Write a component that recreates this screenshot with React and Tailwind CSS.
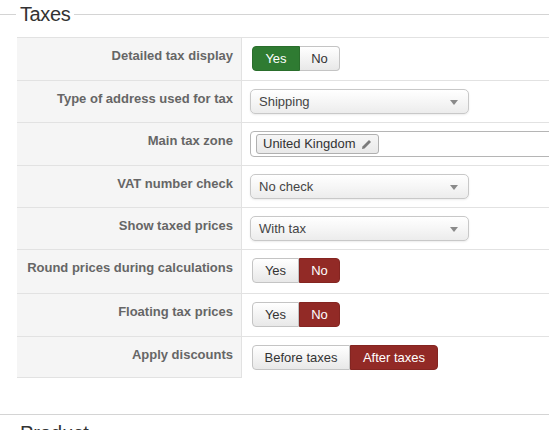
import React from "react";

const FONT = { fontFamily: '"Liberation Sans", Arial, Helvetica, sans-serif' };

function Toggle({ options }) {
  return (
    <div className="ml-[2px] flex h-[25px]">
      {options.map((o, i) => {
        const first = i === 0;
        const last = i === options.length - 1;
        const round = `${first ? "rounded-l-[4px]" : ""} ${last ? "rounded-r-[4px]" : ""}`;
        if (o.active === "green") {
          return (
            <div
              key={o.label}
              className={`flex items-center justify-center border border-[#2a6e2c] bg-[#2f7b32] text-[13px] text-white ${round}`}
              style={{ width: o.w }}
            >
              {o.label}
            </div>
          );
        }
        if (o.active === "red") {
          return (
            <div
              key={o.label}
              className={`flex items-center justify-center border border-[#842521] bg-[#922a26] text-[13px] text-white ${round}`}
              style={{ width: o.w }}
            >
              {o.label}
            </div>
          );
        }
        return (
          <div
            key={o.label}
            className={`flex items-center justify-center border border-[#c4c4c4] bg-gradient-to-b from-white to-[#e8e8e8] text-[13px] text-[#333] ${round} ${first ? "" : "border-l-0"}`}
            style={{ width: o.w }}
          >
            {o.label}
          </div>
        );
      })}
    </div>
  );
}

function Select({ value }) {
  return (
    <div className="relative flex h-[25px] w-[219px] items-center rounded-[5px] border border-[#c8c8c8] bg-gradient-to-b from-white via-[#f6f6f6] to-[#ececec] pl-[8px] text-[13px] text-[#444] shadow-[0_1px_2px_rgba(0,0,0,0.08)]">
      {value}
      <svg className="absolute right-[10px] top-[10px]" width="8" height="5" viewBox="0 0 8 5">
        <polygon points="0,0 8,0 4,5" fill="#8a8a8a" />
      </svg>
    </div>
  );
}

function TagInput() {
  return (
    <div className="flex h-[26px] w-[320px] items-center rounded-[4px] border border-[#b5b5b5] bg-white pl-[5px]">
      <div className="flex h-[20px] items-center gap-[5px] rounded-[3px] border border-[#b0b0b0] bg-gradient-to-b from-[#f6f6f6] to-[#e9e9e9] pl-[6px] pr-[6px] text-[13px] text-[#333]">
        United Kingdom
        <svg width="11" height="11" viewBox="0 0 11 11">
          <polygon points="8,1 10,3 3.5,9.5 1,10 1.5,7.5" fill="#7a7a7a" />
        </svg>
      </div>
    </div>
  );
}

const rows = [
  { label: "Detailed tax display", h: 43, ctrl: <Toggle options={[{ label: "Yes", w: 48, active: "green" }, { label: "No", w: 40 }]} /> },
  { label: "Type of address used for tax", h: 42, ctrl: <Select value="Shipping" /> },
  { label: "Main tax zone", h: 43, ctrl: <TagInput /> },
  { label: "VAT number check", h: 42, ctrl: <Select value="No check" /> },
  { label: "Show taxed prices", h: 42, ctrl: <Select value="With tax" /> },
  { label: "Round prices during calculations", h: 44, ctrl: <Toggle options={[{ label: "Yes", w: 47 }, { label: "No", w: 41, active: "red" }]} /> },
  { label: "Floating tax prices", h: 43, ctrl: <Toggle options={[{ label: "Yes", w: 47 }, { label: "No", w: 41, active: "red" }]} /> },
  { label: "Apply discounts", h: 42, ctrl: <Toggle options={[{ label: "Before taxes", w: 98 }, { label: "After taxes", w: 88, active: "red" }]} /> },
];

export default function App() {
  return (
    <div className="h-[430px] w-[549px] overflow-hidden bg-white" style={FONT}>
      {/* fieldset legend */}
      <div className="flex h-[28px] items-center">
        <div className="h-px w-[16px] bg-[#d4d4d4]" />
        <div className="px-[4px] text-[20px] leading-[28px] tracking-[-0.4px] text-[#333]">Taxes</div>
        <div className="h-px flex-1 bg-[#d4d4d4]" />
      </div>

      <div className="ml-[17px] mt-[9px]">
        {rows.map((r, i) => (
          <div key={r.label} className="flex border-t border-[#e2e2e2]" style={{ height: r.h }}>
            <div
              className={`w-[225px] shrink-0 border-r border-[#e2e2e2] bg-[#f5f5f5] pr-[8px] pt-[9px] text-right text-[13px] font-bold leading-[18px] text-[#666] ${i === rows.length - 1 ? "border-b" : ""}`}
            >
              {r.label}
            </div>
            <div className="pl-[8px] pt-[8px]">{r.ctrl}</div>
          </div>
        ))}
      </div>

      <div className="mt-[36px] h-px w-full bg-[#d4d4d4]" />
      <div className="ml-[20px] mt-[6px] text-[20px] leading-[24px] text-[#333]">Product</div>
    </div>
  );
}
